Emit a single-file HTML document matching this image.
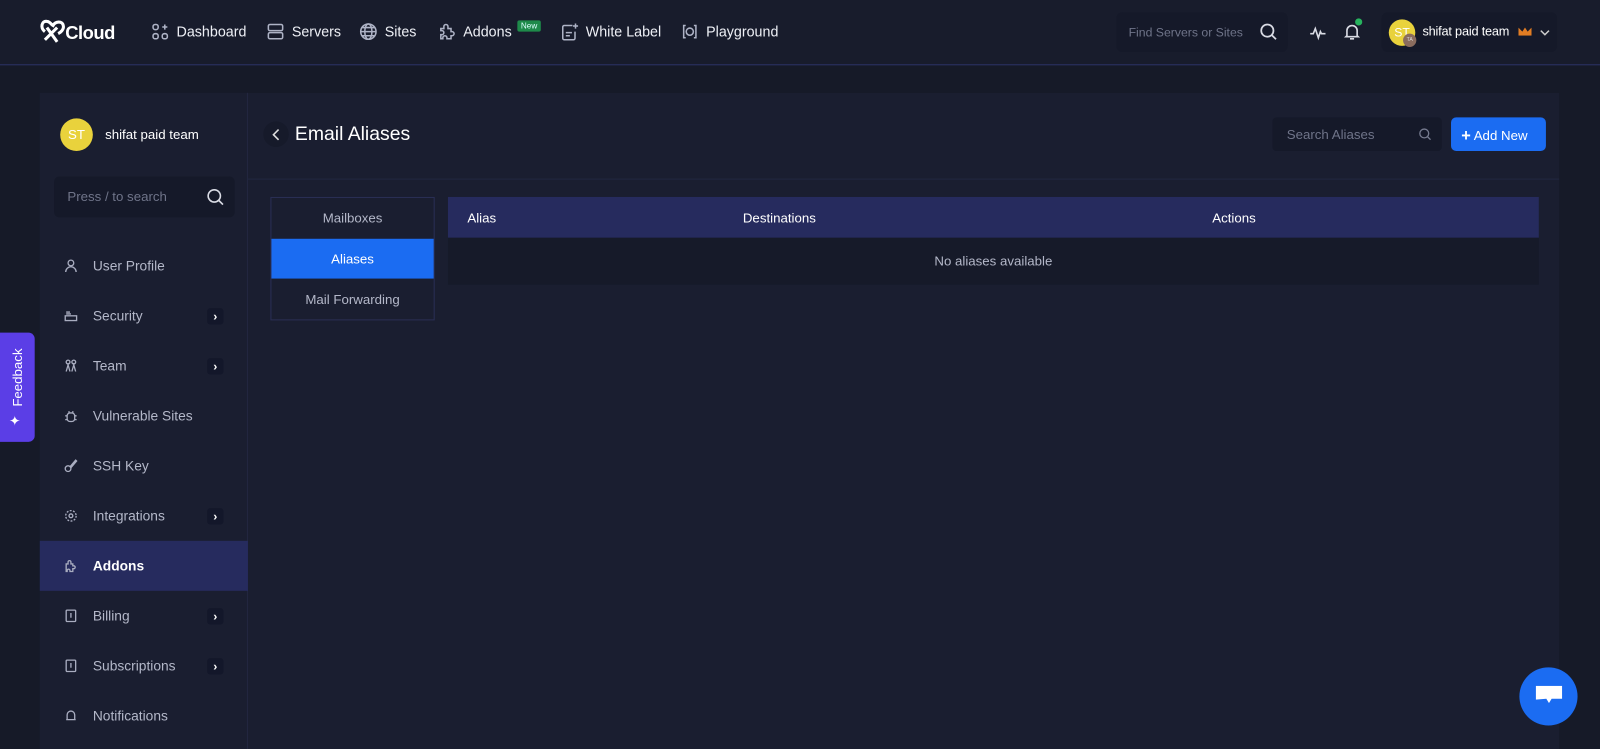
<!DOCTYPE html>
<html><head><meta charset="utf-8"><style>
*{box-sizing:border-box;margin:0;padding:0}
body{width:1600px;height:734px;overflow:hidden;background:#161a28;font-family:"Liberation Sans",sans-serif;color:#e6e8f0;position:relative}
#w{position:absolute;left:0;top:0;width:1568px;height:720px;transform:scale(1.020408);transform-origin:0 0}
.top{position:absolute;left:0;top:0;width:1568px;height:64px;background:#181c2c;border-bottom:1px solid #2c3366}
.nav{position:absolute;top:22px;font-size:14px;color:#eef0f6;display:flex;align-items:center;gap:7px}
.ic{width:18px;height:18px;stroke:#aeb3c6;fill:none;stroke-width:1.5}
.card{position:absolute;left:39px;top:91px;width:1489px;height:643px;background:#1a1e30}
.side{position:absolute;left:39px;top:91px;width:204px;height:643px;background:#1a1e30;border-right:1px solid #222740}
.item{position:absolute;left:39px;width:204px;height:49px;display:flex;align-items:center;font-size:13.5px;color:#b4b8c9}
.item svg{position:absolute;left:24px;width:13px;height:13px;stroke:#a9adc0;fill:none;stroke-width:1.4}
.item span{position:absolute;left:52px}
.chev{position:absolute;left:164px;width:16px;height:16px;background:#13172a;border-radius:3px;color:#fff;font-size:12px;text-align:center;line-height:16px;font-weight:bold}
</style></head><body><div id="w">
<div class="top"></div>
<div style="position:absolute;left:38px;top:17px;font-size:18px;font-weight:bold;color:#fff;letter-spacing:-.5px"><svg width="28" height="26" viewBox="0 0 28 26" style="vertical-align:middle" fill="none" stroke="#fff" stroke-width="3"><path d="M6 14C1 10 3 3 8 4c3 0 4 3 6 4 2-4 9-5 10 0 1 4-3 7-5 8M6 22l12-12M8 10l10 14"/></svg><span style="position:relative;top:3px;left:-2px">Cloud</span></div>
<div class="nav" style="left:148px"><svg class="ic" viewBox="0 0 18 18"><rect x="2" y="2" width="5" height="5" rx="2"/><rect x="2" y="11" width="5" height="5" rx="2"/><rect x="11" y="11" width="5" height="5" rx="2"/><path d="M13.5 2v5M11 4.5h5"/></svg>Dashboard</div>
<div class="nav" style="left:261px"><svg class="ic" viewBox="0 0 18 18"><rect x="2" y="2" width="14" height="6" rx="1.5"/><rect x="2" y="10" width="14" height="6" rx="1.5"/></svg>Servers</div>
<div class="nav" style="left:352px"><svg class="ic" viewBox="0 0 18 18"><circle cx="9" cy="9" r="7.5"/><ellipse cx="9" cy="9" rx="3.5" ry="7.5"/><path d="M1.5 9h15M3 5h12M3 13h12"/></svg>Sites</div>
<div class="nav" style="left:429px"><svg class="ic" viewBox="0 0 18 18"><path d="M3 6h3V4a2 2 0 014 0v2h3v3h1a2 2 0 010 4h-1v3H9v-1a2 2 0 00-4 0v1H3v-4h1a2 2 0 000-4H3z"/></svg>Addons<span style="font-size:8px;background:#1e8a4a;color:#dff;padding:1px 3px;border-radius:2px;position:relative;top:-6px;left:-1px">New</span></div>
<div class="nav" style="left:549px"><svg class="ic" viewBox="0 0 18 18"><path d="M12 3H4a1.5 1.5 0 00-1.5 1.5v11A1.5 1.5 0 004 17h9a1.5 1.5 0 001.5-1.5V9M15 1v5M12.5 3.5h5M5.5 10h6M5.5 13h4"/></svg>White Label</div>
<div class="nav" style="left:667px"><svg class="ic" viewBox="0 0 18 18"><path d="M5 3H3v12h2M13 3h2v12h-2"/><circle cx="9" cy="9" r="3.5"/></svg>Playground</div>
<div style="position:absolute;left:1094px;top:12px;width:168px;height:39px;background:#151929;border-radius:6px;font-size:12px;color:#6f7489;padding:13px 12px">Find Servers or Sites<svg width="18" height="18" viewBox="0 0 18 18" style="position:absolute;right:10px;top:10px" fill="none" stroke="#d9dbe4" stroke-width="1.7"><circle cx="8" cy="8" r="6"/><path d="M12.5 12.5l4 4"/></svg></div>
<svg width="18" height="18" viewBox="0 0 18 18" style="position:absolute;left:1283px;top:23px" fill="none" stroke="#d9dbe4" stroke-width="1.6"><path d="M1 10h3l2-5 3 9 2-6 1 2h4"/></svg>
<svg width="18" height="18" viewBox="0 0 18 18" style="position:absolute;left:1316px;top:22px" fill="none" stroke="#d9dbe4" stroke-width="1.6"><path d="M4 13V8a5 5 0 0110 0v5l1 1H3zM7 16h4"/></svg>
<div style="position:absolute;left:1328px;top:18px;width:7px;height:7px;border-radius:50%;background:#27b35e"></div>
<div style="position:absolute;left:1354px;top:12px;width:172px;height:39px;background:#151929;border-radius:6px"></div>
<div style="position:absolute;left:1361px;top:19px;width:26px;height:26px;border-radius:50%;background:#e9d23c;color:#fff;font-size:12px;text-align:center;line-height:26px">ST</div>
<div style="position:absolute;left:1375px;top:33px;width:13px;height:13px;border-radius:50%;background:#8a6c5e;color:#ddd;font-size:5px;text-align:center;line-height:13px">TA</div>
<div style="position:absolute;left:1394px;top:24px;font-size:12.5px;color:#fff;letter-spacing:-.2px">shifat paid team</div>
<div style="position:absolute;left:1488px;top:27px;width:13px;height:8px;background:#e27d23;clip-path:polygon(0 0,30% 50%,50% 0,70% 50%,100% 0,100% 100%,0 100%)"></div>
<svg width="10" height="8" viewBox="0 0 10 8" style="position:absolute;left:1509px;top:28px" fill="none" stroke="#ccc" stroke-width="1.5"><path d="M1 2l4 4 4-4"/></svg>

<div class="card"></div>
<div class="side"></div>
<div style="position:absolute;left:243px;top:175px;width:1285px;height:1px;background:#222740"></div>
<div style="position:absolute;left:59px;top:116px;width:32px;height:32px;border-radius:50%;background:#e9d23c;color:#fff;font-size:13px;text-align:center;line-height:32px">ST</div>
<div style="position:absolute;left:103px;top:124px;font-size:13px;color:#fff">shifat paid team</div>
<div style="position:absolute;left:53px;top:173px;width:177px;height:40px;background:#151929;border-radius:5px;font-size:13px;color:#6f7489;padding:12px 13px">Press / to search<svg width="18" height="18" viewBox="0 0 18 18" style="position:absolute;right:10px;top:11px" fill="none" stroke="#d9dbe4" stroke-width="1.6"><circle cx="8" cy="8" r="6"/><path d="M12.5 12.5l4 4"/></svg></div>

<div class="item" style="top:236px"><svg viewBox="0 0 14 14"><circle cx="7" cy="4" r="3"/><path d="M1.5 13.5a5.5 5.5 0 0111 0"/></svg><span>User Profile</span></div>
<div class="item" style="top:285px"><svg viewBox="0 0 14 14"><rect x="1" y="7" width="12" height="5"/><path d="M2 5h5M2 3h4"/></svg><span>Security</span><div class="chev">›</div></div>
<div class="item" style="top:334px"><svg viewBox="0 0 14 14"><circle cx="4" cy="3" r="2"/><circle cx="10" cy="3" r="2"/><path d="M2 13l2-7 2 7M8 13l2-7 2 7"/></svg><span>Team</span><div class="chev">›</div></div>
<div class="item" style="top:383px"><svg viewBox="0 0 14 14"><rect x="3" y="4" width="8" height="9" rx="3"/><path d="M1 7h2M11 7h2M1 11h2M11 11h2M5 4V2M9 4V2"/></svg><span>Vulnerable Sites</span></div>
<div class="item" style="top:432px"><svg viewBox="0 0 14 14"><circle cx="4" cy="10" r="3"/><path d="M6 8l6-7 1 1-6 7"/></svg><span>SSH Key</span></div>
<div class="item" style="top:481px"><svg viewBox="0 0 14 14"><circle cx="7" cy="7" r="2"/><circle cx="7" cy="7" r="5.5" stroke-dasharray="2 1.5"/></svg><span>Integrations</span><div class="chev">›</div></div>
<div class="item" style="top:530px;background:#262b5e;color:#fff;font-weight:bold"><svg viewBox="0 0 14 14"><path d="M2 5h2V3a1.5 1.5 0 013 0v2h2v2h1a1.5 1.5 0 010 3H9v3H6v-1a1.5 1.5 0 00-3 0v1H2z"/></svg><span>Addons</span></div>
<div class="item" style="top:579px"><svg viewBox="0 0 14 14"><rect x="2" y="1" width="10" height="12" rx="1"/><path d="M7 4v5"/></svg><span>Billing</span><div class="chev">›</div></div>
<div class="item" style="top:628px"><svg viewBox="0 0 14 14"><rect x="2" y="1" width="10" height="12" rx="1"/><path d="M7 4v5"/></svg><span>Subscriptions</span><div class="chev">›</div></div>
<div class="item" style="top:677px"><svg viewBox="0 0 14 14"><path d="M3 11V6a4 4 0 018 0v5zM2 11h10"/></svg><span>Notifications</span></div>

<div style="position:absolute;left:0;top:326px;width:34px;height:107px;background:#5b3ee6;border-radius:0 6px 6px 0"></div>
<div style="position:absolute;left:17px;top:370px;transform:translate(-50%,-50%) rotate(-90deg);font-size:13px;color:#fff;white-space:nowrap">Feedback</div>
<div style="position:absolute;left:9px;top:405px;color:#fff;font-size:13px">✦</div>

<div style="position:absolute;left:258px;top:119px;width:25px;height:25px;border-radius:50%;background:#161a2a"></div>
<svg width="10" height="12" viewBox="0 0 10 12" style="position:absolute;left:266px;top:126px" fill="none" stroke="#ddd" stroke-width="1.6"><path d="M7 1L2 6l5 5"/></svg>
<div style="position:absolute;left:289px;top:121px;font-size:19px;color:#fff">Email Aliases</div>
<div style="position:absolute;left:1247px;top:115px;width:166px;height:33px;background:#151929;border-radius:4px;font-size:13px;color:#6f7489;padding:9px 14px">Search Aliases<svg width="13" height="13" viewBox="0 0 18 18" style="position:absolute;right:10px;top:10px" fill="none" stroke="#777c90" stroke-width="1.8"><circle cx="8" cy="8" r="6"/><path d="M12.5 12.5l4 4"/></svg></div>
<div style="position:absolute;left:1422px;top:115px;width:93px;height:33px;background:#1b6cf2;border-radius:5px;color:#fff;font-size:13px;padding:9px 0 0 10px"><b style="font-size:16px;position:relative;top:1px">+</b> Add New</div>

<div style="position:absolute;left:265px;top:193px;width:161px;height:121px;border:1px solid #2a2f55;background:#1a1e30"></div>
<div style="position:absolute;left:265px;top:206px;width:161px;text-align:center;font-size:13px;color:#b4b8c9">Mailboxes</div>
<div style="position:absolute;left:266px;top:234px;width:159px;height:39px;background:#1b6cf2;text-align:center;font-size:13px;color:#fff;line-height:39px">Aliases</div>
<div style="position:absolute;left:265px;top:286px;width:161px;text-align:center;font-size:13px;color:#b4b8c9">Mail Forwarding</div>

<div style="position:absolute;left:439px;top:193px;width:1069px;height:40px;background:#262b5e"></div>
<div style="position:absolute;left:458px;top:206px;font-size:13px;color:#fff">Alias</div>
<div style="position:absolute;left:728px;top:206px;font-size:13px;color:#fff">Destinations</div>
<div style="position:absolute;left:1188px;top:206px;font-size:13px;color:#fff">Actions</div>
<div style="position:absolute;left:439px;top:233px;width:1069px;height:46px;background:#161a29;text-align:center;line-height:46px;font-size:13px;color:#b4b8c9">No aliases available</div>

<div style="position:absolute;left:1489px;top:654px;width:57px;height:57px;border-radius:50%;background:#1b6cf2"></div>
<div style="position:absolute;left:1505px;top:672px;width:26px;height:17px;background:#fff;clip-path:polygon(0 0,100% 0,100% 75%,60% 75%,50% 100%,40% 75%,0 80%)"></div>
</div></body></html>
